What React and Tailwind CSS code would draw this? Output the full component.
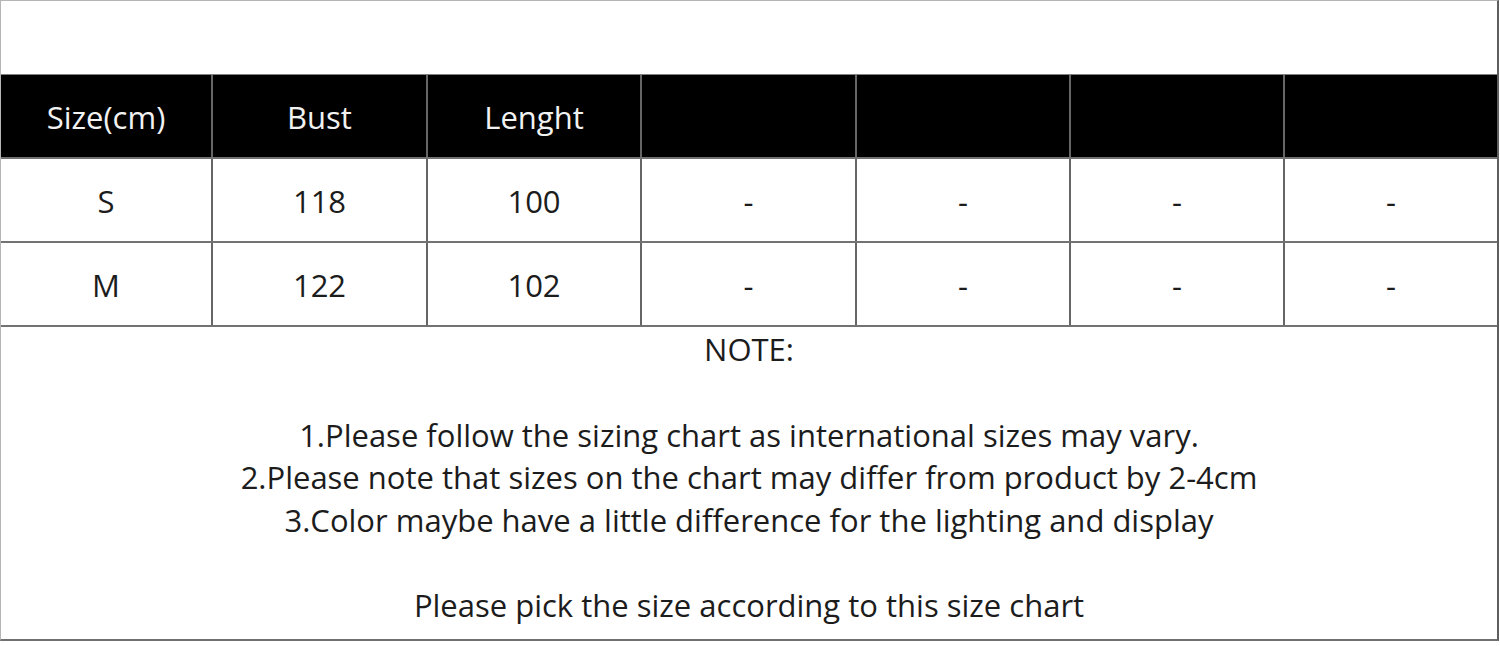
import React from 'react';

const headers = ["Size(cm)", "Bust", "Lenght", "", "", "", ""];
const rows = [
    ["S", "118", "100", "-", "-", "-", "-"],
    ["M", "122", "102", "-", "-", "-", "-"],
];

const notes = [
    "1.Please follow the sizing chart as international sizes may vary.",
    "2.Please note that sizes on the chart may differ from product by 2-4cm",
    "3.Color maybe have a little difference for the lighting and display",
];

const SizeChart = () => {
    return (
        <div className="w-[1500px] h-[646px] bg-white" style={{ fontFamily: '"Open Sans", "Liberation Sans", sans-serif' }}>
            <div className="w-[1499px] h-[641px] flex flex-col border-t border-l border-[#b5b5b5] border-r-2 border-r-[#5f5f5f] border-b-2 border-b-[#707070]">
                {/* empty band on top */}
                <div className="h-[74px] border-b border-[#808080]" />

                {/* header row */}
                <div className="grid grid-cols-[212px_215px_214px_215px_214px_214px_1fr] h-[82px] bg-black">
                    {headers.map((h, i) => (
                        <div
                            key={i}
                            className={`flex items-center justify-center pt-[2px] text-[31px] text-[#f2f2f2] ${i < 6 ? "border-r-2 border-[#666666]" : ""}`}
                        >
                            {h}
                        </div>
                    ))}
                </div>

                {/* body rows */}
                {rows.map((row, r) => (
                    <div key={r} className="grid grid-cols-[212px_215px_214px_215px_214px_214px_1fr] h-[84px] border-t-2 border-[#727272]">
                        {row.map((c, i) => (
                            <div
                                key={i}
                                className={`flex items-center justify-center pt-[2px] text-[31px] text-[#1c1c1c] ${i < 6 ? "border-r-2 border-[#666666]" : ""}`}
                            >
                                {c}
                            </div>
                        ))}
                    </div>
                ))}

                {/* notes */}
                <div className="flex-1 border-t-2 border-[#727272] flex flex-col items-center text-[31px] text-[#1c1c1c] leading-[42.5px]">
                    <div className="mt-[1px]">NOTE:</div>
                    <div className="mt-[43px] flex flex-col items-center">
                        {notes.map((n) => (
                            <div key={n}>{n}</div>
                        ))}
                    </div>
                    <div className="mt-[43px]">Please pick the size according to this size chart</div>
                </div>
            </div>
        </div>
    );
};

export default SizeChart;
